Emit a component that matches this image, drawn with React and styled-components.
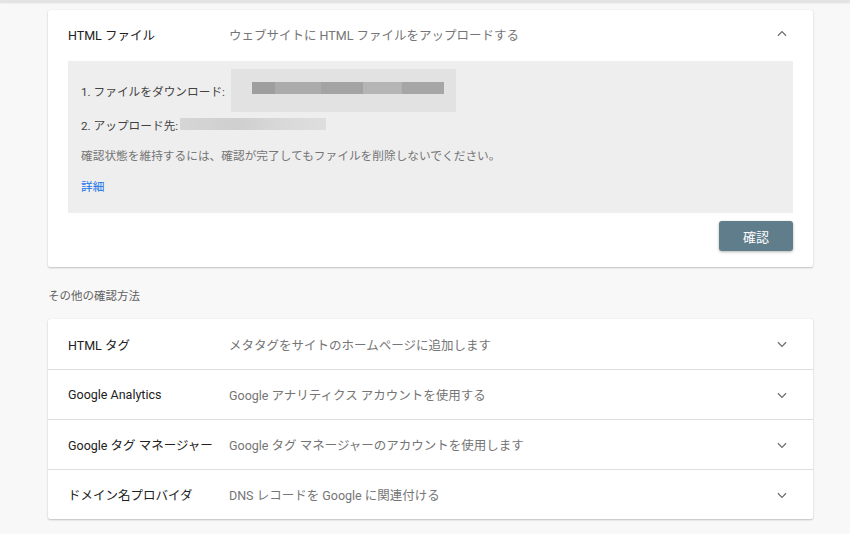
import React from 'react'
import styled, { createGlobalStyle } from 'styled-components'

const GlobalStyle = createGlobalStyle`
  html, body {
    margin: 0;
    padding: 0;
    background: #f8f8f8;
    font-family: Roboto, "Noto Sans CJK JP", sans-serif;
  }
`

const Page = styled.div`
  width: 850px;
  height: 534px;
  overflow: hidden;
  position: relative;
  box-sizing: border-box;
  padding: 10px 37px 0 48px;
`

const TopShade = styled.div`
  position: absolute;
  top: 0;
  left: 0;
  right: 0;
  height: 2px;
  background: #e4e4e4;
  box-shadow: 0 1px 2px rgba(0, 0, 0, 0.12);
`

const Card = styled.div`
  background: #fff;
  border-radius: 2px;
  box-shadow: 0 1px 2px rgba(0, 0, 0, 0.22), 0 0 1px rgba(0, 0, 0, 0.1);
`

const Row = styled.div`
  display: flex;
  align-items: center;
  box-sizing: border-box;
  height: ${p => p.$h || 50}px;
  padding: 0 24px ${p => p.$pb || 0}px 20px;
  border-top: ${p => (p.$first ? 'none' : '1px solid #dedede')};
  font-size: 12.5px;
`

const Label = styled.div`
  width: 161px;
  flex-shrink: 0;
  color: #212121;
  white-space: nowrap;
`

const Desc = styled.div`
  flex: 1;
  color: #757575;
`

const Chevron = ({ up }) => (
  <svg width="14" height="14" viewBox="0 0 24 24" fill="none" stroke="#6a6a6a" strokeWidth="2">
    <path d={up ? 'M5 15l7-7 7 7' : 'M5 9l7 7 7-7'} />
  </svg>
)

const Body = styled.div`
  padding: 0 20px 16px 20px;
`

const Panel = styled.div`
  background: #eeeeee;
  padding: 9px 13px 13px 13px;
  font-size: 11.7px;
  color: #424242;
`

const Line = styled.div`
  display: flex;
  align-items: center;
  height: ${p => p.$h}px;
  color: ${p => p.$muted ? '#757575' : '#424242'};
`

const Blur = styled.div`
  position: relative;
  width: ${p => p.$w}px;
  height: ${p => p.$h}px;
  margin-left: ${p => p.$ml || 0}px;
  background: ${p => p.$bg};
`

const BlurBar = styled.div`
  position: absolute;
  left: 21px;
  top: 13px;
  width: 192px;
  height: 12px;
  background: linear-gradient(90deg, #9e9e9e 0 12%, #ababab 12% 36%, #a3a3a3 36% 58%, #b5b5b5 58% 78%, #a6a6a6 78% 100%);
`

const LinkText = styled.a`
  color: #1a73e8;
  text-decoration: none;
`

const Actions = styled.div`
  display: flex;
  justify-content: flex-end;
  padding-top: 8px;
`

const Button = styled.button`
  width: 74px;
  height: 30px;
  border: none;
  border-radius: 3px;
  background: #607d8b;
  color: #fff;
  font-family: inherit;
  font-size: 13px;
  box-shadow: 0 1px 3px rgba(0, 0, 0, 0.3);
`

const SectionTitle = styled.div`
  font-size: 11.5px;
  line-height: 14px;
  color: #616161;
  padding: 22px 0 16px;
`

const others = [
  ['HTML タグ', 'メタタグをサイトのホームページに追加します'],
  ['Google Analytics', 'Google アナリティクス アカウントを使用する'],
  ['Google タグ マネージャー', 'Google タグ マネージャーのアカウントを使用します'],
  ['ドメイン名プロバイダ', 'DNS レコードを Google に関連付ける'],
]

export default function App() {
  return (
    <>
      <GlobalStyle />
      <Page>
        <TopShade />
        <Card>
          <Row $first $h={51} $pb={3}>
            <Label>HTML ファイル</Label>
            <Desc>ウェブサイトに HTML ファイルをアップロードする</Desc>
            <Chevron up />
          </Row>
          <Body>
            <Panel>
              <Line $h={40}>
                1. ファイルをダウンロード:
                <Blur $w={225} $h={43} $ml={6} $bg="#e2e2e2">
                  <BlurBar />
                </Blur>
              </Line>
              <Line $h={28}>
                2. アップロード先:
                <Blur $w={146} $h={12} $ml={2} $bg="linear-gradient(90deg, #d6d6d6, #cfcfcf 40%, #d9d9d9 70%, #dedede)" />
              </Line>
              <Line $h={32} $muted>確認状態を維持するには、確認が完了してもファイルを削除しないでください。</Line>
              <Line $h={30}>
                <LinkText href="#">詳細</LinkText>
              </Line>
            </Panel>
            <Actions>
              <Button>確認</Button>
            </Actions>
          </Body>
        </Card>
        <SectionTitle>その他の確認方法</SectionTitle>
        <Card>
          {others.map(([label, desc], i) => (
            <Row key={label} $first={i === 0}>
              <Label>{label}</Label>
              <Desc>{desc}</Desc>
              <Chevron />
            </Row>
          ))}
        </Card>
      </Page>
    </>
  )
}
